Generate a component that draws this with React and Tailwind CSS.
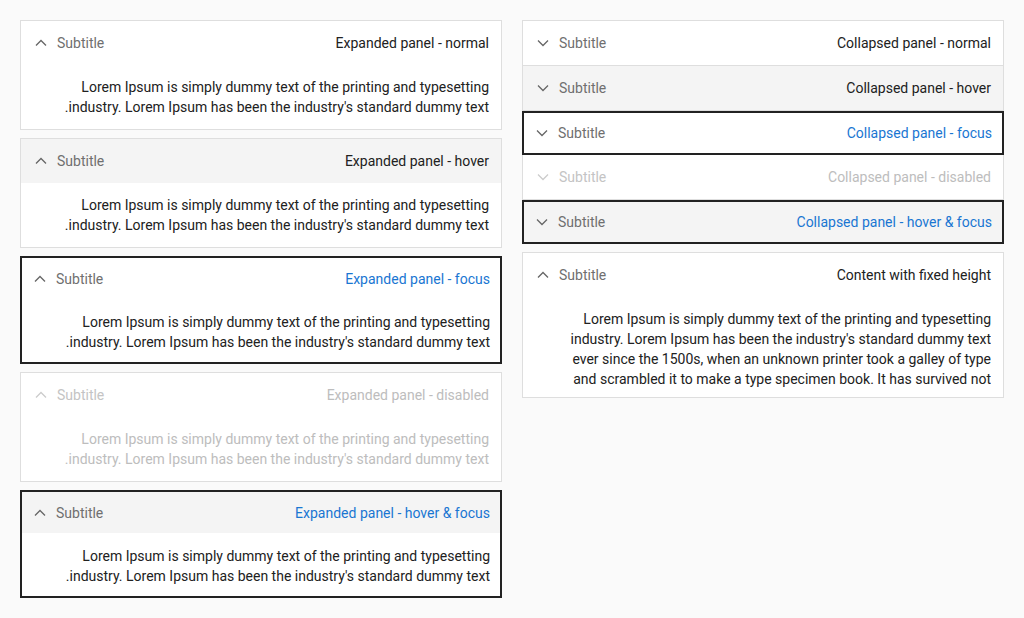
import React from "react";

const TEXT2 =
  "Lorem Ipsum is simply dummy text of the printing and typesetting industry. Lorem Ipsum has been the industry's standard dummy text.";
const TEXT_LONG =
  "Lorem Ipsum is simply dummy text of the printing and typesetting industry. Lorem Ipsum has been the industry's standard dummy text ever since the 1500s, when an unknown printer took a galley of type and scrambled it to make a type specimen book. It has survived not";

function Chevron({ up, color }) {
  return (
    <svg width="16" height="16" viewBox="0 0 16 16" className="shrink-0">
      <polyline
        points={up ? "3,10.5 8,5.5 13,10.5" : "3,5.5 8,10.5 13,5.5"}
        fill="none"
        stroke={color}
        strokeWidth="1.3"
      />
    </svg>
  );
}

function Header({ title, up, variant, className }) {
  const titleColor =
    variant === "focus"
      ? "text-[#1976d2]"
      : variant === "disabled"
      ? "text-[#bdbdbd]"
      : "text-[#212121]";
  const subColor = variant === "disabled" ? "text-[#c4c4c4]" : "text-[#6f6f6f]";
  const chevColor = variant === "disabled" ? "#cccccc" : "#666666";
  return (
    <div className={`flex items-center leading-5 ${className}`}>
      <span className={titleColor}>{title}</span>
      <span className="flex-1" />
      <span className={subColor}>Subtitle</span>
      <span className="mr-2">
        <Chevron up={up} color={chevColor} />
      </span>
    </div>
  );
}

function Expanded({ title, hover, focus, disabled }) {
  if (focus) {
    return (
      <div dir="rtl" className="border-2 border-[#222222] bg-white">
        <Header
          title={title}
          up
          variant="focus"
          className={`h-[41px] px-[10px] ${hover ? "bg-[#f4f4f4]" : ""}`}
        />
        <div className="px-[10px] pt-[13px] pb-[10px] leading-5 text-[#212121]">{TEXT2}</div>
      </div>
    );
  }
  return (
    <div dir="rtl" className="border border-[#dedede] bg-white">
      <Header
        title={title}
        up
        variant={disabled ? "disabled" : "normal"}
        className={`h-11 px-3 ${hover ? "bg-[#f4f4f4]" : ""}`}
      />
      <div
        className={`px-3 py-3 leading-5 ${disabled ? "text-[#bdbdbd]" : "text-[#212121]"}`}
      >
        {TEXT2}
      </div>
    </div>
  );
}

export default function App() {
  return (
    <div
      className="min-h-[618px] bg-[#fafafa] p-5 text-[14px]"
      style={{ fontFamily: "Roboto, 'Liberation Sans', sans-serif" }}
    >
      <div className="grid grid-cols-2 gap-5 items-start">
        <div className="flex flex-col gap-2">
          <Expanded title="Expanded panel - normal" />
          <Expanded title="Expanded panel - hover" hover />
          <Expanded title="Expanded panel - focus" focus />
          <Expanded title="Expanded panel - disabled" disabled />
          <Expanded title="Expanded panel - hover & focus" hover focus />
        </div>
        <div className="flex flex-col">
          <div dir="rtl" className="border border-[#dedede] bg-white">
            <Header title="Collapsed panel - normal" variant="normal" className="h-11 px-3" />
          </div>
          <div dir="rtl" className="border border-t-0 border-[#dedede] bg-[#f4f4f4]">
            <Header title="Collapsed panel - hover" variant="normal" className="h-11 px-3" />
          </div>
          <div dir="rtl" className="border-2 border-[#222222] bg-white">
            <Header title="Collapsed panel - focus" variant="focus" className="h-10 px-[10px]" />
          </div>
          <div dir="rtl" className="border border-t-0 border-[#dedede] bg-white">
            <Header title="Collapsed panel - disabled" variant="disabled" className="h-11 px-3" />
          </div>
          <div dir="rtl" className="border-2 border-[#222222] bg-[#f4f4f4]">
            <Header
              title="Collapsed panel - hover & focus"
              variant="focus"
              className="h-10 px-[10px]"
            />
          </div>
          <div dir="rtl" className="mt-2 border border-[#dedede] bg-white">
            <Header title="Content with fixed height" up variant="normal" className="h-11 px-3" />
            <div className="pr-3 pl-7 pt-3 pb-2">
              <div dir="ltr" className="h-20 overflow-hidden text-right leading-5 text-[#212121]">
                {TEXT_LONG}
              </div>
            </div>
          </div>
        </div>
      </div>
    </div>
  );
}
